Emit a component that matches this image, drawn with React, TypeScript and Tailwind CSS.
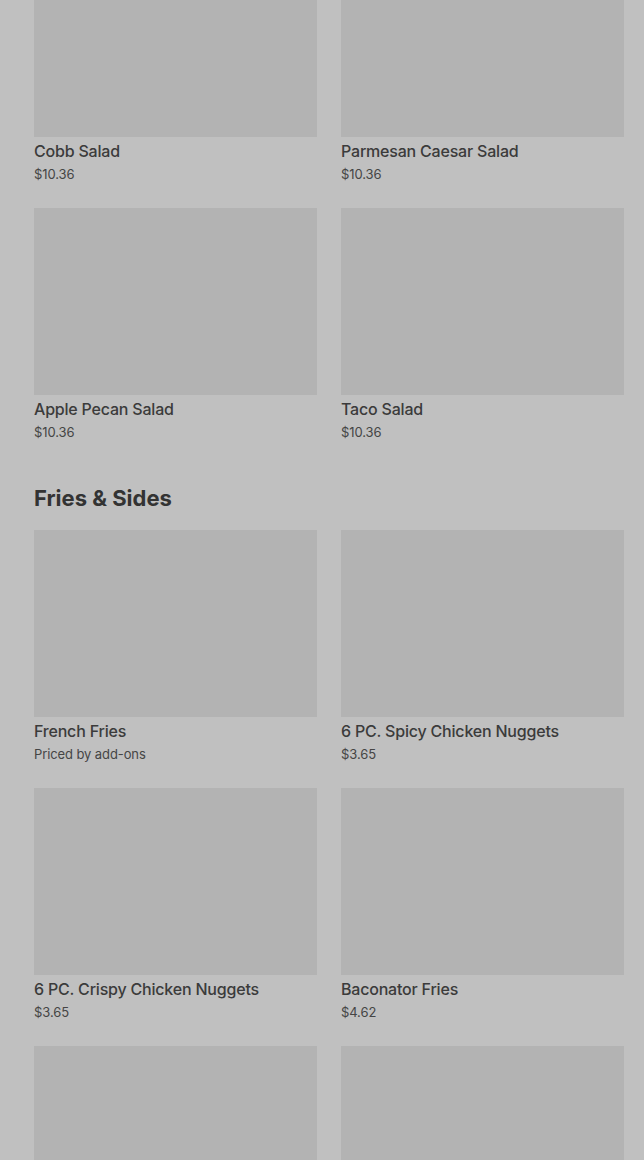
import React from "react";

type Item = { name?: string; price?: string };

const salads: Item[] = [
  { name: "Cobb Salad", price: "$10.36" },
  { name: "Parmesan Caesar Salad", price: "$10.36" },
  { name: "Apple Pecan Salad", price: "$10.36" },
  { name: "Taco Salad", price: "$10.36" },
];

const fries: Item[] = [
  { name: "French Fries", price: "Priced by add-ons" },
  { name: "6 PC. Spicy Chicken Nuggets", price: "$3.65" },
  { name: "6 PC. Crispy Chicken Nuggets", price: "$3.65" },
  { name: "Baconator Fries", price: "$4.62" },
  {},
  {},
];

function Card({ item }: { item: Item }) {
  return (
    <div className="flex flex-col">
      <div className="h-[187px] w-full bg-[#b3b3b3]" />
      {item.name ? (
        <>
          <div className="mt-[2px] h-[24px] text-[16px] leading-[24px] font-medium tracking-[-0.2px] text-[#3b3b3b] truncate">
            {item.name}
          </div>
          <div className="mt-[1px] h-[20px] text-[13px] leading-[20px] tracking-[-0.1px] text-[#454545]">
            {item.price}
          </div>
        </>
      ) : null}
    </div>
  );
}

export default function App() {
  return (
    <div
      className="w-[644px] h-[1160px] overflow-hidden bg-[#c0c0c0]"
      style={{ fontFamily: "Inter, 'Noto Sans', sans-serif" }}
    >
      <div className="mt-[-50px] pl-[34px] pr-[20px]">
        <div className="grid grid-cols-2 gap-x-[24px] gap-y-[24px]">
          {salads.map((s, i) => (
            <Card key={i} item={s} />
          ))}
        </div>
        <h2 className="mt-[40px] mb-[16px] h-[32px] text-[22px] leading-[32px] font-bold text-[#333333]">
          Fries &amp; Sides
        </h2>
        <div className="grid grid-cols-2 gap-x-[24px] gap-y-[24px]">
          {fries.map((s, i) => (
            <Card key={i} item={s} />
          ))}
        </div>
      </div>
    </div>
  );
}
